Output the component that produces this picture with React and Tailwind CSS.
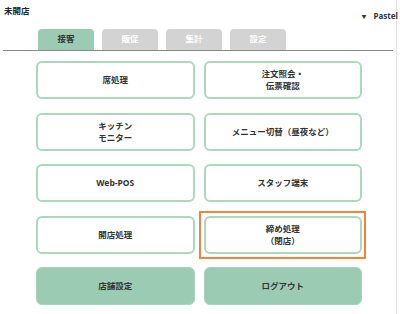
import React from "react";

const font = { fontFamily: '"Noto Sans", "Noto Sans CJK JP", sans-serif' };

function Btn({ children, filled }) {
  const base =
    "h-[38px] rounded-[6px] flex flex-col items-center justify-center text-[8.5px] leading-[12px] font-bold text-[#333] text-center";
  const style = filled
    ? "bg-[#9ccbb3] border border-[#a9d4bd]"
    : "bg-white border-2 border-[#acd8c0]";
  return <div className={base + " " + style}>{children}</div>;
}

export default function App() {
  return (
    <div className="w-[400px] h-[314px] bg-white flex" style={font}>
      <div className="w-[397px] h-full border-r border-[#e4e4e4] flex flex-col">
        <div className="h-[29px] flex justify-between">
          <div className="pl-[4px] pt-[4px] text-[8.5px] leading-[13px] font-bold text-[#222]">未開店</div>
          <div className="pt-[10px] flex items-start text-[8px] leading-[12px] font-bold text-[#333] -mr-[2px]">
            <span className="text-[5px] leading-[12px] mr-[7px]">▼</span>
            <span>Pastel</span>
          </div>
        </div>
        <div className="flex gap-x-[8px] pl-[35px] mx-[3px] border-b border-[#8a8a8a]">
          <div className="w-[56px] h-[21px] rounded-t-[4px] bg-[#9ccbb3] flex items-center justify-center text-[8.5px] font-bold text-[#333]">接客</div>
          <div className="w-[56px] h-[21px] rounded-t-[4px] bg-[#d3d3d3] flex items-center justify-center text-[8.5px] font-bold text-white">販促</div>
          <div className="w-[56px] h-[21px] rounded-t-[4px] bg-[#d3d3d3] flex items-center justify-center text-[8.5px] font-bold text-white">集計</div>
          <div className="w-[56px] h-[21px] rounded-t-[4px] bg-[#d3d3d3] flex items-center justify-center text-[8.5px] font-bold text-white">設定</div>
        </div>
        <div className="ml-[36px] mt-[10px] w-[326px] grid grid-cols-2 gap-x-[9px] gap-y-[13.5px]">
          <Btn>席処理</Btn>
          <Btn>
            <span>注文照会・</span>
            <span>伝票確認</span>
          </Btn>
          <Btn>
            <span>キッチン</span>
            <span>モニター</span>
          </Btn>
          <Btn>メニュー切替（昼夜など）</Btn>
          <Btn>Web-POS</Btn>
          <Btn>スタッフ端末</Btn>
          <Btn>開店処理</Btn>
          <div className="-ml-[5px] -mr-[4px] -my-[5px] pl-[3px] pr-[2px] py-[3px] border-2 border-[#f5843a]">
            <Btn>
              <span>締め処理</span>
              <span>（閉店）</span>
            </Btn>
          </div>
          <Btn filled>店舗設定</Btn>
          <Btn filled>ログアウト</Btn>
        </div>
      </div>
    </div>
  );
}
